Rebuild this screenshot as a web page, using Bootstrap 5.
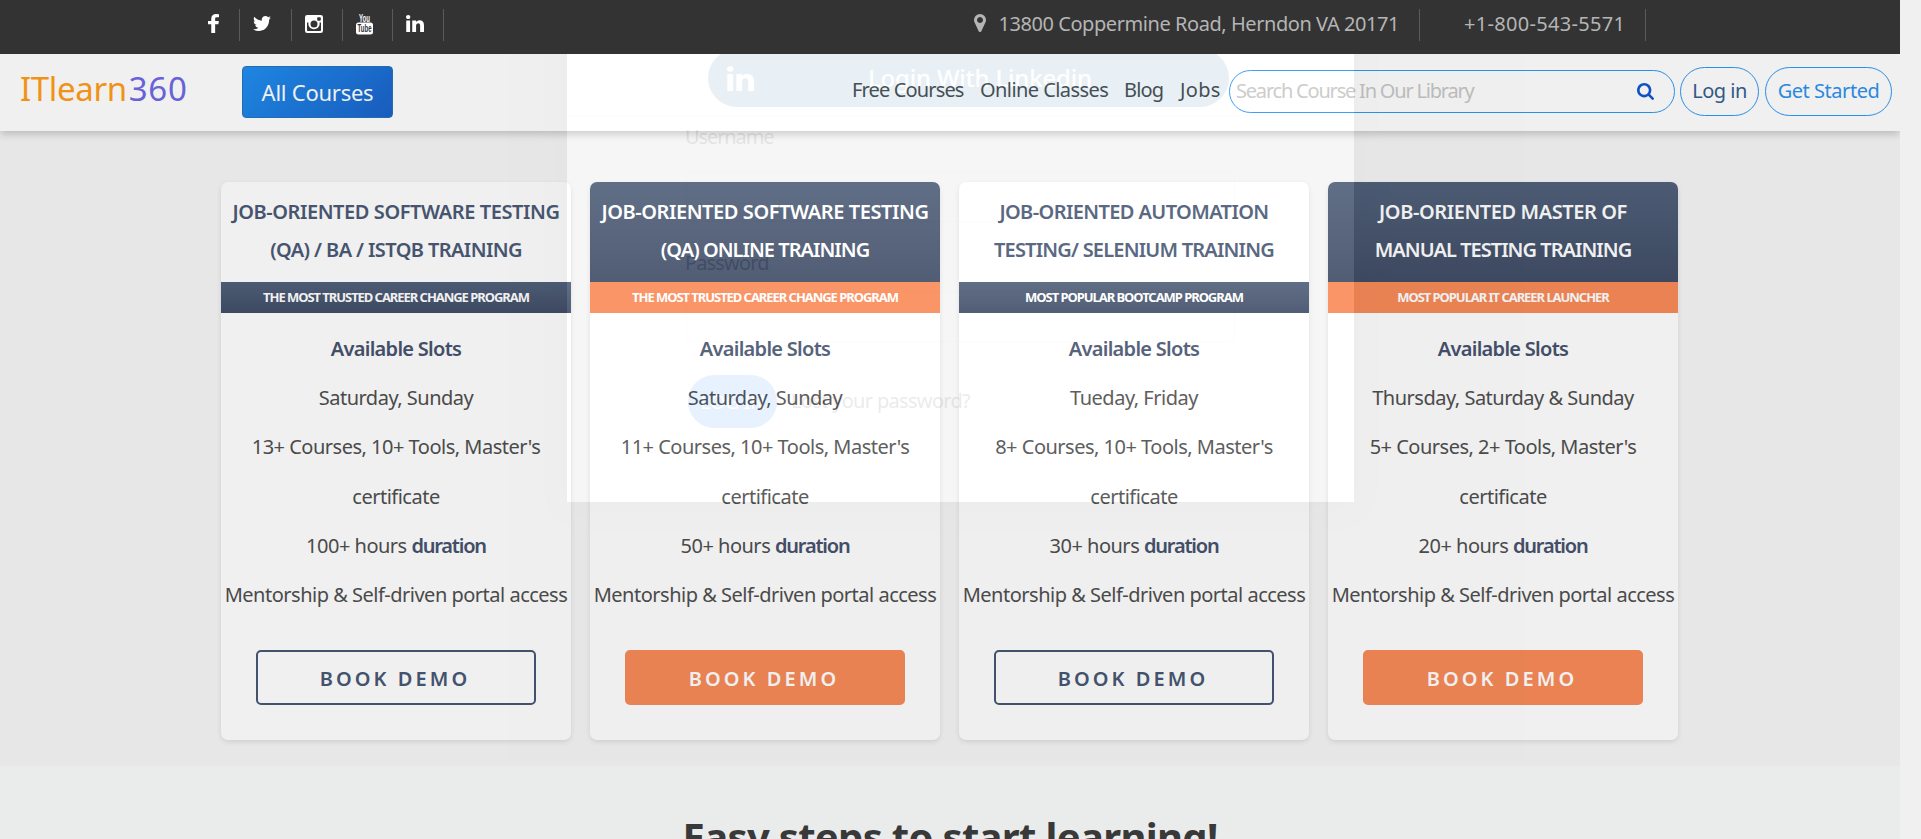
<!DOCTYPE html>
<html lang="en">
<head>
<meta charset="utf-8">
<meta name="viewport" content="width=device-width, initial-scale=1">
<title>ITlearn360</title>
<link href="https://cdn.jsdelivr.net/npm/bootstrap@5.3.0/dist/css/bootstrap.min.css" rel="stylesheet">
<style>
  body { font-family: "Noto Sans", sans-serif; font-size: 20px; color: #4f4f4f; height: 839px; overflow: hidden; background: #fff; letter-spacing: -.5px; }
  .page { width: 1900px; height: 839px; overflow: hidden; background: #f9fbfa; }
  a { color: inherit; text-decoration: none; white-space: nowrap; }

  /* top bar */
  .topbar { height: 54px; width: 1900px; background: #333; color: #b5b5b5; z-index: 30; padding: 9px 254px 0 195px; }
  .topbar .cell { height: 32px; border-right: 1px solid #5b5b5b; display: flex; align-items: center; }
  .soc { color: #fff; padding-left: 13px; }
  .soc svg { fill: currentColor; display: block; margin-top: -3px; }
  .soc.s-f { width: 45px; } .soc.s-tw { width: 52px; } .soc.s-ig { width: 51px; } .soc.s-yt { width: 50px; } .soc.s-in { width: 51px; }
  .addr { letter-spacing: -.44px; line-height: 29px; padding-right: 20px; }
  .phone { letter-spacing: .31px; line-height: 29px; padding-left: 44px; width: 226px; }

  /* main navigation */
  .mainnav { height: 77px; box-shadow: 0 3px 8px rgba(0,0,0,.2); z-index: 5; padding: 0 8px 2px 20px; }
  .logo { font-size: 33px; letter-spacing: -.35px; color: #ff9c1a; line-height: 69px; width: 222px; }
  .logo span { color: #6f68e6; letter-spacing: .7px; margin-left: 2px; }
  .btn-courses { width: 151px; height: 52px; border: 1px solid #2374bd; border-radius: 4px; font-size: 22px; letter-spacing: -.25px; color: #fff; background: linear-gradient(135deg, #208ff0, #1a62c9); padding: 0; line-height: 50px; }
  .btn-courses:hover { color: #fff; }
  .links { margin-left: 459px; line-height: 71px; color: #4d4d4d; }
  .l1 { width: 128px; letter-spacing: -.85px; } .l2 { width: 144px; letter-spacing: -.57px; } .l3 { width: 56px; letter-spacing: -.8px; } .l4 { width: 44px; letter-spacing: .3px; }
  .pill { border: 1.5px solid #2d98f5; border-radius: 26px; }
  .searchbox { width: 446px; height: 43px; padding: 0 20px 0 6px; color: #c8c8c8; letter-spacing: -1.2px; margin-top: -1px; }
  .pill-btn { height: 49px; line-height: 46px; text-align: center; }
  .login { width: 79px; margin-left: 5px; color: #33608f; letter-spacing: -.5px; }
  .start { width: 127px; margin-left: 6px; color: #2d91ee; letter-spacing: -.47px; }

  /* course cards */
  .plans { background: #f6f6f6; height: 635px; padding: 51px 221px 0; gap: 19px; }
  .plan { width: 350px; height: 558px; background: #fff; border-radius: 7px; box-shadow: 0 2px 5px rgba(0,0,0,.1); text-align: center; overflow: hidden; white-space: nowrap; }
  .plan h3 { height: 100px; margin: 0; padding-top: 11px; font-size: 20px; font-weight: 600; line-height: 38px; color: #4b5a76; letter-spacing: -.42px; }
  .plan h3 .t1 { letter-spacing: -.6px; } .plan h3 .t2 { letter-spacing: -.8px; } .plan h3 .t3 { letter-spacing: -.97px; }
  .ribbon { height: 31px; line-height: 30px; font-size: 13px; font-weight: 700; color: #fff; letter-spacing: -1.05px; }
  .navy { background: linear-gradient(#51617b, #414e67); }
  .plan h3.navy { color: #fff; }
  .orange { background: #f98b59; }
  .plan ul { padding: 11px 0 0; margin: 0 0 31px; list-style: none; line-height: 49.2px; height: 306px; }
  .plan strong { color: #47536f; font-weight: 600; letter-spacing: -.72px; }
  .plan li strong.dur { letter-spacing: -1.2px; }
  .demo { width: 280px; height: 55px; border: 2px solid #485874; border-radius: 5px; color: #485874; font-size: 20px; font-weight: 600; letter-spacing: 3.05px; padding: 0 2px 0 0; line-height: 54px; }
  .demo.orange { border-color: #f98b59; color: #fff; }
  .steps { font-size: 40px; font-weight: 700; line-height: 54px; letter-spacing: -.68px; padding-top: 44px; color: #3d3d3d; margin: 0; text-align: center; }

  /* login dialog, part way through its fade */
  .fading { position: absolute; inset: 0; opacity: .085; z-index: 20; background: rgba(0,0,0,.69); overflow: hidden; pointer-events: none; }
  .dialog { position: absolute; left: 567px; top: 0; width: 787px; height: 502px; background: #fff; box-shadow: 0 6px 30px rgba(0,0,0,.45); color: #222; padding: 49px 119px 0 110px; }
  .linkedin { margin-left: 31px; width: 521px; height: 58px; border-radius: 29px; background: #0051a0; background: #0060a0; color: #fff; font-size: 24px; letter-spacing: -.2px; line-height: 58px; padding-left: 19px; }
  .linkedin svg { fill: #fff; }
  .linkedin span { margin-left: 114px; }
  .dialog hr { margin: 8px -119px 0 -110px; opacity: .15; }
  .lab-user { letter-spacing: -1.1px; line-height: 30px; margin: 6px 0 20px 8px; }
  .lab-pass { letter-spacing: -.85px; line-height: 30px; margin: 26px 0 14px 8px; }
  .field { height: 50px; border: 1px solid #e6e6e6; border-radius: 4px; margin-left: 9px; }
  .loginrow { margin: 33px 0 0 11px; }
  .loginbtn { width: 89px; height: 53px; border-radius: 27px; background: #0070ff; color: #fff; text-align: center; line-height: 53px; }
  .lost { margin-left: 14px; letter-spacing: -.68px; padding-bottom: 1px; }
</style>
</head>
<body class="position-relative">
<div class="page">
  <div class="topbar position-relative d-flex">
    <div class="cell soc s-f"><svg width="11" height="19" viewBox="479 0 864 1664" preserveAspectRatio="none"><path d="M1343 12v264h-157q-86 0-116 36t-30 108v189h293l-39 296h-254v759h-306v-759h-255v-296h255v-218q0-186 104-288.5t277-102.5q147 0 228 12z"/></svg></div>
    <div class="cell soc s-tw"><svg width="18" height="15" viewBox="108 256 1580 1280" preserveAspectRatio="none"><path d="M1684 408q-67 98-162 167 1 14 1 42 0 130-38 259.5t-115.5 248.5-184.5 210.5-258 146-323 54.5q-271 0-496-145 35 4 78 4 225 0 401-138-105-2-188-64.5t-114-159.5q33 5 61 5 43 0 85-11-112-23-185.5-111.5t-73.500-205.5v-4q68 38 146 41-66-44-105-115t-39-154q0-88 44-163 121 149 294.5 238.5t371.5 99.5q-8-38-8-74 0-134 94.5-228.5t228.5-94.5q140 0 236 102 109-21 205-78-37 115-142 178 93-10 186-50z"/></svg></div>
    <div class="cell soc s-ig"><svg width="18" height="18" viewBox="0 0 18 18"><path fill-rule="evenodd" d="M2.200 0H15.800Q18 0 18 2.200V15.800Q18 18 15.800 18H2.200Q0 18 0 15.800V2.200Q0 0 2.200 0zM2 7.600V15.200Q2 16 2.800 16H15.200Q16 16 16 15.200V7.600H14.500C15.300 11 12.800 14.200 9 14.200S2.700 11 3.500 7.600zM13 2.200H15Q15.800 2.200 15.800 3V5Q15.800 5.800 15 5.800H13Q12.200 5.800 12.200 5V3Q12.200 2.200 13 2.200zM9 5.500A3.500 3.500 0 1 0 9 12.500A3.500 3.500 0 1 0 9 5.500z"/></svg></div>
    <div class="cell soc s-yt"><svg width="17" height="22" viewBox="0 0 17 22" overflow="visible"><text x="3" y="8.500" font-size="10" font-weight="700" textLength="11" lengthAdjust="spacingAndGlyphs" letter-spacing="0" font-family="Liberation Sans">You</text><rect y="9.500" width="17" height="12" rx="2.500"/><text x="1.500" y="19" font-size="10" font-weight="700" textLength="14" lengthAdjust="spacingAndGlyphs" letter-spacing="0" fill="#333" font-family="Liberation Sans">Tube</text></svg></div>
    <div class="cell soc s-in"><svg width="18" height="17" viewBox="0 148 1536 1470" preserveAspectRatio="none"><path d="M349 625v991h-330v-991h330zm21-306q1 73-50.5 122t-135.5 49h-2q-82 0-132-49t-50-122q0-74 51.500-122.500t134.500-48.500 133 48.500 51 122.500zm1166 729v568h-329v-530q0-105-40.500-164.500t-126.500-59.500q-63 0-105.500 34.500t-63.500 85.500q-11 30-11 81v553h-329q2-399 2-647t-1-296l-1-48h329v144h-2q20-32 41-56t56.500-52 87-43.500 114.500-15.500q171 0 275 113.500t104 332.500z"/></svg></div>
    <div class="cell addr ms-auto"><svg width="12" height="18" viewBox="384 128 1024 1536" fill="#b5b5b5" class="me-2 mb-1" preserveAspectRatio="none"><path d="M1152 640q0-106-75-181t-181-75-181 75-75 181 75 181 181 75 181-75 75-181zm256 0q0 109-33 179l-364 774q-16 33-47.500 52t-67.500 19-67.500-19-46.500-52l-365-774q-33-70-33-179 0-212 150-362t362-150 362 150 150 362z"/></svg><span class="ms-1 pb-1">13800 Coppermine Road, Herndon VA 20171</span></div>
    <div class="cell phone"><span class="pb-1">+1-800-543-5571</span></div>
  </div>

  <nav class="mainnav position-relative bg-white d-flex align-items-center">
    <a class="logo align-self-start" href="#">ITlearn<span>360</span></a>
    <a class="btn btn-courses" href="#">All Courses</a>
    <div class="links d-flex align-self-start">
      <a class="l1" href="#">Free Courses</a><a class="l2" href="#">Online Classes</a><a class="l3" href="#">Blog</a><a class="l4" href="#">Jobs</a>
    </div>
    <div class="d-flex align-items-center ms-auto">
      <div class="pill searchbox d-flex align-items-center justify-content-between"><span>Search Course In Our Library</span>
        <svg width="17" height="17" viewBox="64 128 1664 1664" fill="#1258d0"><path d="M1216 832q0-185-131.500-316.500t-316.500-131.500-316.500 131.500-131.500 316.500 131.500 316.500 316.500 131.500 316.500-131.500 131.500-316.500zm512 832q0 52-38 90t-90 38q-54 0-90-38l-343-342q-179 124-399 124-143 0-273.500-55.500t-225-150-150-225-55.500-273.500 55.500-273.500 150-225 225-150 273.500-55.500 273.500 55.500 225 150 150 225 55.500 273.500q0 220-124 399l343 343q37 37 37 90z"/></svg></div>
      <a class="pill pill-btn login" href="#">Log in</a>
      <a class="pill pill-btn start" href="#">Get Started</a>
    </div>
  </nav>

  <section class="plans d-flex">
    <article class="plan">
      <h3>JOB-ORIENTED SOFTWARE TESTING<br><span class="t1">(QA) / BA / ISTQB TRAINING</span></h3>
      <div class="ribbon navy">THE MOST TRUSTED CAREER CHANGE PROGRAM</div>
      <ul><li><strong>Available Slots</strong></li><li>Saturday, Sunday</li><li>13+ Courses, 10+ Tools, Master's<br>certificate</li><li>100+ hours <strong class="dur">duration</strong></li><li>Mentorship &amp; Self-driven portal access</li></ul>
      <a class="btn demo" href="#">BOOK DEMO</a>
    </article>
    <article class="plan">
      <h3 class="navy">JOB-ORIENTED SOFTWARE TESTING<br><span class="t3">(QA) ONLINE TRAINING</span></h3>
      <div class="ribbon orange">THE MOST TRUSTED CAREER CHANGE PROGRAM</div>
      <ul><li><strong>Available Slots</strong></li><li>Saturday, Sunday</li><li>11+ Courses, 10+ Tools, Master's<br>certificate</li><li>50+ hours <strong class="dur">duration</strong></li><li>Mentorship &amp; Self-driven portal access</li></ul>
      <a class="btn demo orange" href="#">BOOK DEMO</a>
    </article>
    <article class="plan">
      <h3><span class="t1">JOB-ORIENTED AUTOMATION</span><br><span class="t2">TESTING/ SELENIUM TRAINING</span></h3>
      <div class="ribbon navy">MOST POPULAR BOOTCAMP PROGRAM</div>
      <ul><li><strong>Available Slots</strong></li><li>Tueday, Friday</li><li>8+ Courses, 10+ Tools, Master's<br>certificate</li><li>30+ hours <strong class="dur">duration</strong></li><li>Mentorship &amp; Self-driven portal access</li></ul>
      <a class="btn demo" href="#">BOOK DEMO</a>
    </article>
    <article class="plan">
      <h3 class="navy">JOB-ORIENTED MASTER OF<br><span class="t3">MANUAL TESTING TRAINING</span></h3>
      <div class="ribbon orange">MOST POPULAR IT CAREER LAUNCHER</div>
      <ul><li><strong>Available Slots</strong></li><li>Thursday, Saturday &amp; Sunday</li><li>5+ Courses, 2+ Tools, Master's<br>certificate</li><li>20+ hours <strong class="dur">duration</strong></li><li>Mentorship &amp; Self-driven portal access</li></ul>
      <a class="btn demo orange" href="#">BOOK DEMO</a>
    </article>
  </section>

  <h2 class="steps">Easy steps to start learning!</h2>
</div>

<div class="fading">
  <div class="dialog">
    <div class="linkedin d-flex align-items-center"><svg width="27" height="25" viewBox="0 148 1536 1470" preserveAspectRatio="none"><path d="M349 625v991h-330v-991h330zm21-306q1 73-50.5 122t-135.5 49h-2q-82 0-132-49t-50-122q0-74 51.500-122.500t134.500-48.500 133 48.500 51 122.500zm1166 729v568h-329v-530q0-105-40.500-164.500t-126.500-59.500q-63 0-105.500 34.500t-63.500 85.500q-11 30-11 81v553h-329q2-399 2-647t-1-296l-1-48h329v144h-2q20-32 41-56t56.500-52 87-43.500 114.500-15.500q171 0 275 113.500t104 332.500z"/></svg><span class="fw-medium">Login With Linkedin</span></div>
    <hr>
    <div class="lab-user">Username</div>
    <div class="field"></div>
    <div class="lab-pass">Password</div>
    <div class="field"></div>
    <div class="loginrow d-flex align-items-center"><div class="loginbtn">LOG IN</div><span class="lost">Lost your password?</span></div>
  </div>
</div>
</body>
</html>
